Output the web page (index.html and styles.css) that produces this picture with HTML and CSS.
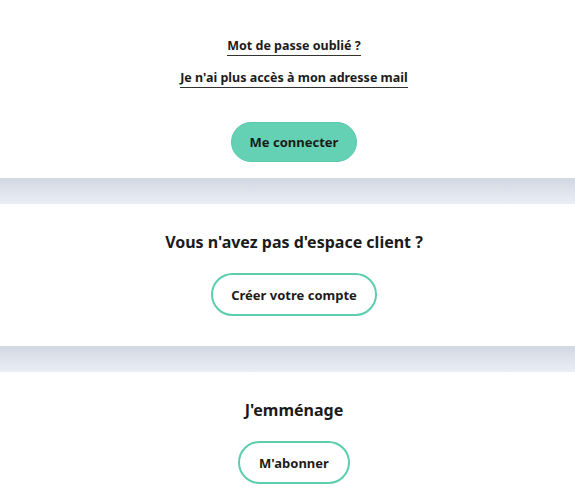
FILE: index.html
```html
<!DOCTYPE html>
<html lang="fr">
<head>
<meta charset="utf-8">
<title>Connexion</title>
<link rel="stylesheet" href="styles.css">
</head>
<body>
<section class="panel panel-login">
  <a class="text-link" href="#">Mot de passe oublié ?</a>
  <a class="text-link" href="#">Je n'ai plus accès à mon adresse mail</a>
  <button class="btn btn-filled" type="button">Me connecter</button>
</section>
<div class="band"></div>
<section class="panel panel-signup">
  <h2 class="panel-title">Vous n'avez pas d'espace client ?</h2>
  <button class="btn btn-outline btn-wide" type="button">Créer votre compte</button>
</section>
<div class="band"></div>
<section class="panel panel-move">
  <h2 class="panel-title">J'emménage</h2>
  <button class="btn btn-outline" type="button">M'abonner</button>
</section>
</body>
</html>
```
FILE: styles.css
```css
* { box-sizing: border-box; }
html, body { margin: 0; padding: 0; background: #fff; }
body {
  font-family: "Noto Sans", "Open Sans", sans-serif;
  color: #1b1b1b;
}
.panel {
  display: flex;
  flex-direction: column;
  align-items: center;
  padding-left: 13px;
}
.panel-login {
  padding-top: 37px;
  height: 178px;
}
.text-link {
  font-size: 12.5px;
  font-weight: 700;
  color: #1b1b1b;
  text-decoration: none;
  line-height: 18px;
  border-bottom: 1px solid #333;
}
.text-link + .text-link { margin-top: 13px; }
.btn {
  font-family: inherit;
  font-size: 13px;
  font-weight: 700;
  color: #1b1b1b;
  border-radius: 999px;
  height: 40px;
  cursor: pointer;
}
.btn-filled {
  margin-top: 34px;
  width: 126px;
  background: #64d0b4;
  border: 1px solid #5cc9ad;
}
.btn-outline {
  background: #fff;
  border: 2px solid #5ccdaf;
  height: 43px;
  width: 112px;
}
.btn-wide { width: 166px; }
.band {
  height: 26px;
  background: linear-gradient(#d3d7e1, #eaeef7);
}
.panel-title {
  margin: 0;
  font-size: 16px;
  font-weight: 700;
  line-height: 22px;
}
.panel-signup {
  height: 142px;
  padding-top: 27px;
}
.panel-signup .btn { margin-top: 20px; }
.panel-move {
  padding-top: 27px;
}
.panel-move .btn { margin-top: 20px; }
```
